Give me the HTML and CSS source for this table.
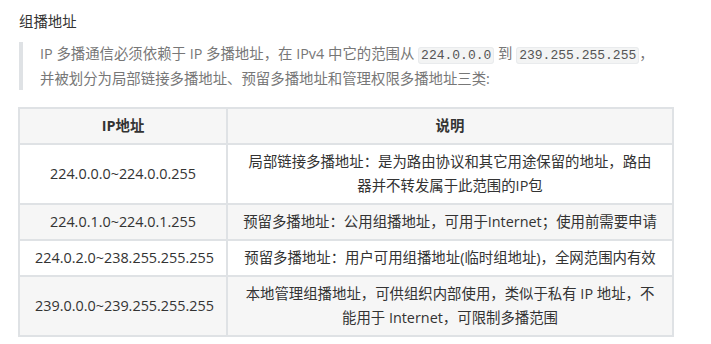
FILE: index.html
```html
<!DOCTYPE html>
<html lang="zh-CN">
<head>
<meta charset="utf-8">
<title>组播地址</title>
<link rel="stylesheet" href="styles.css">
</head>
<body>
<main class="doc">
  <p class="title">组播地址</p>
  <blockquote class="quote">
    <p><span>IP 多播通信必须依赖于 IP 多播地址，在 IPv4 中它的范围从</span> <code>224.0.0.0</code> <span>到</span> <code>239.255.255.255</code><span>，</span><span>并被划分为局部链接多播地址、预留多播地址和管理权限多播地址三类:</span></p>
  </blockquote>
  <table class="grid">
    <colgroup>
      <col class="col-ip">
      <col class="col-desc">
    </colgroup>
    <thead>
      <tr><th>IP地址</th><th>说明</th></tr>
    </thead>
    <tbody>
      <tr><td>224.0.0.0~224.0.0.255</td><td>局部链接多播地址：是为路由协议和其它用途保留的地址，路由器并不转发属于此范围的IP包</td></tr>
      <tr><td>224.0.1.0~224.0.1.255</td><td>预留多播地址：公用组播地址，可用于Internet；使用前需要申请</td></tr>
      <tr><td>224.0.2.0~238.255.255.255</td><td>预留多播地址：用户可用组播地址(临时组地址)，全网范围内有效</td></tr>
      <tr><td>239.0.0.0~239.255.255.255</td><td>本地管理组播地址，可供组织内部使用，类似于私有 IP 地址，不能用于 Internet，可限制多播范围</td></tr>
    </tbody>
  </table>
</main>
</body>
</html>
```
FILE: styles.css
```css
html, body {
  margin: 0;
  padding: 0;
  background: #ffffff;
}
body {
  font-family: "Open Sans", "Noto Sans CJK SC", sans-serif;
  font-size: 14.4px;
  color: #333333;
}
.doc {
  width: 656px;
  padding: 10px 0 0 18px;
}
.title {
  margin: 0 0 0 1px;
  line-height: 24px;
}
.quote {
  margin: 8px 0 0 1px;
  padding: 0 12px 0 17px;
  border-left: 4px solid #dfe2e5;
  color: #777777;
}
.quote p {
  margin: 0;
  line-height: 23px;
}
.quote code {
  font-family: "Liberation Mono", monospace;
  font-size: 13px;
  background: #f3f4f4;
  border: 1px solid #e9ebed;
  border-radius: 3px;
  padding: 0 2px;
  color: #555;
}
.grid {
  margin-top: 17px;
  width: 656px;
  border-collapse: collapse;
  table-layout: fixed;
}
.col-ip {
  width: 208px;
}
.grid th,
.grid td {
  border: 2px solid #dfe2e5;
  padding: 5px 15px;
  line-height: 24px;
  text-align: center;
}
.grid th {
  font-weight: bold;
  background: #f6f6f6;
}
.grid tbody tr:nth-child(odd) td {
  background: #ffffff;
}
.grid tbody tr:nth-child(even) td {
  background: #f6f6f6;
}
```
